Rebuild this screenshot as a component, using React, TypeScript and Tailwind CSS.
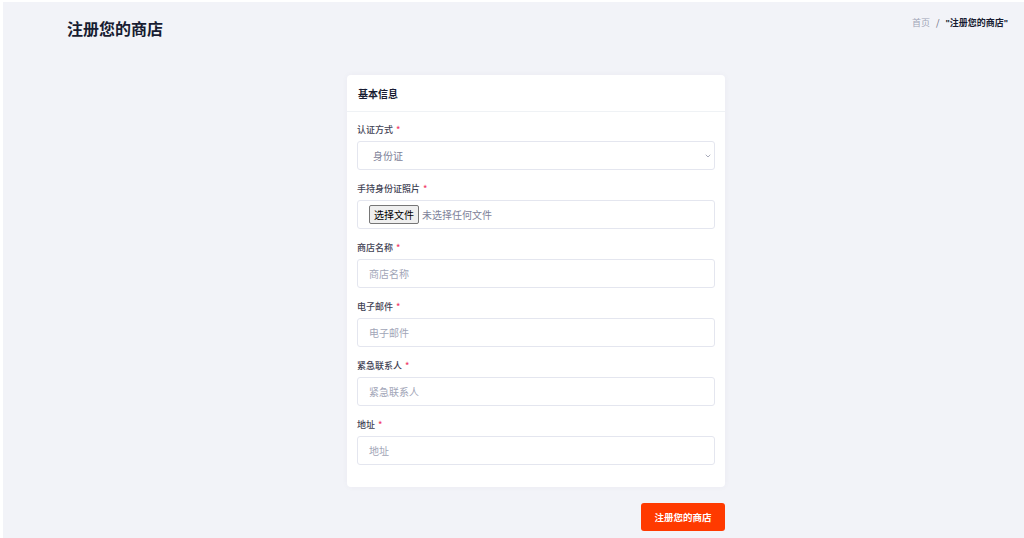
import { ChevronDown } from 'lucide-react'

const fields = [
  { label: '商店名称', placeholder: '商店名称' },
  { label: '电子邮件', placeholder: '电子邮件' },
  { label: '紧急联系人', placeholder: '紧急联系人' },
  { label: '地址', placeholder: '地址' },
]

const Label = ({ text }: { text: string }) => (
  <div className="h-[13px] mb-[5px] flex items-center text-[9px] font-medium text-[#3f4254] leading-none">
    {text}
    <span className="ml-[3px] text-[#f1416c]">*</span>
  </div>
)

export default function App() {
  return (
    <div
      className="min-h-[538px] bg-white pl-[3px] pt-[2px]"
      style={{ fontFamily: '"Noto Sans CJK SC", "Noto Sans", sans-serif' }}
    >
      <div className="min-h-[536px] bg-[#f2f3f8] pb-[6px]">
        <div className="flex items-start justify-between pl-[64px] pr-[16px] h-[73px]">
          <h1 className="mt-[14px] text-[16px] font-bold text-[#181c32] leading-[24px]">注册您的商店</h1>
          <div className="mt-[14px] flex items-center text-[9px] leading-[14px]">
            <span className="text-[#a1a5b7]">首页</span>
            <span className="mx-[6px] text-[#5e6278]">/</span>
            <span className="font-bold text-[#181c32]">
              <span className="font-['Liberation_Sans']">"</span>注册您的商店<span className="font-['Liberation_Sans']">"</span>
            </span>
          </div>
        </div>

        <div className="w-[378px] ml-[344px]">
          <div className="bg-white rounded-[4px] shadow-[0_0_6px_rgba(82,63,105,0.04)]">
            <div className="h-[37px] flex items-center px-[11px] border-b border-[#eff2f5]">
              <span className="text-[10px] font-bold text-[#181c32]">基本信息</span>
            </div>
            <div className="px-[10px] pt-[11px] pb-[10px]">
              <div className="mb-[12px]">
                <Label text="认证方式" />
                <div className="h-[29px] border border-[#e4e6ef] rounded-[3px] flex items-center justify-between pl-[15px] pr-[2px]">
                  <span className="text-[10px] text-[#7e8299]">身份证</span>
                  <ChevronDown className="w-[8px] h-[8px] text-[#7e8299]" strokeWidth={2} />
                </div>
              </div>
              <div className="mb-[12px]">
                <Label text="手持身份证照片" />
                <div className="h-[29px] border border-[#e4e6ef] rounded-[3px] flex items-center pl-[11px]">
                  <span className="h-[19px] px-[4px] flex items-center bg-[#efefef] border border-[#767676] rounded-[2px] text-[10px] text-black">
                    选择文件
                  </span>
                  <span className="ml-[3px] text-[10px] text-[#7e8299]">未选择任何文件</span>
                </div>
              </div>
              {fields.map((f) => (
                <div key={f.label} className="mb-[12px]">
                  <Label text={f.label} />
                  <div className="h-[29px] border border-[#e4e6ef] rounded-[3px] flex items-center pl-[11px]">
                    <span className="text-[10px] text-[#a1a5b7]">{f.placeholder}</span>
                  </div>
                </div>
              ))}
            </div>
          </div>
          <div className="flex justify-end mt-[16px]">
            <button className="w-[84px] h-[28px] rounded-[3px] bg-[#ff3a00] text-white text-[9.5px] font-bold">
              注册您的商店
            </button>
          </div>
        </div>
      </div>
    </div>
  )
}
